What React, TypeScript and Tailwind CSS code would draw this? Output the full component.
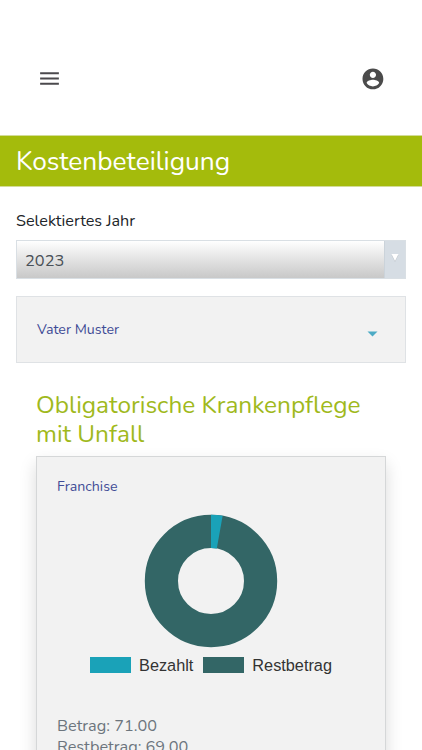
import React from "react";

const data = [
  { label: "Bezahlt", value: 2, color: "#1aa2b8" },
  { label: "Restbetrag", value: 69, color: "#336666" },
];

function Donut() {
  const total = data.reduce((sum, d) => sum + d.value, 0);
  const radius = 49.6;
  const circumference = 2 * Math.PI * radius;
  const paid = (data[0].value / total) * circumference;
  return (
    <svg className="mx-auto block" width="134" height="134" viewBox="-67 -67 134 134">
      <circle r={radius} fill="none" stroke={data[1].color} strokeWidth="33.2" />
      <circle
        r={radius}
        fill="none"
        stroke={data[0].color}
        strokeWidth="33.2"
        strokeDasharray={`${paid} ${circumference - paid}`}
        transform="rotate(-90)"
      />
    </svg>
  );
}

export default function App() {
  return (
    <div className="h-[750px] w-[422px] overflow-hidden bg-white font-['Nunito','Lato',sans-serif]">
      <header className="flex h-[135px] items-start justify-between pt-[66px] pr-[37px] pl-[37px]">
        <button aria-label="Menu" className="block">
          <svg width="25" height="25" viewBox="0 0 24 24" fill="#4b494d">
            <path d="M3 18h18v-2H3v2zm0-5h18v-2H3v2zm0-7v2h18V6H3z" />
          </svg>
        </button>
        <button aria-label="Account" className="block">
          <svg width="25" height="25" viewBox="-0.400 -0.400 24 24" fill="#4b4b4b">
            <path d="M12 2C6.480 2 2 6.480 2 12s4.480 10 10 10 10-4.480 10-10S17.520 2 12 2zm0 3c1.660 0 3 1.340 3 3s-1.340 3-3 3-3-1.340-3-3 1.340-3 3-3zm0 14.200c-2.500 0-4.710-1.280-6-3.220.030-1.990 4-3.080 6-3.080 1.990 0 5.970 1.090 6 3.080-1.290 1.940-3.500 3.220-6 3.220z" />
          </svg>
        </button>
      </header>

      <h1 className="flex h-[52px] items-center border-y border-[#d3dc98] bg-[#a4bb0c] px-4 pt-0.5 text-[26.3px] text-white">
        Kostenbeteiligung
      </h1>

      <main className="px-4">
        <label className="block pt-[22px] text-[16.2px] leading-6 text-[#212529]">Selektiertes Jahr</label>
        <div className="mt-[7px] flex h-[39px] border border-[#d9dfe4] bg-linear-to-b from-white to-[#c8c8c8]">
          <span className="flex-1 pt-px pl-2 text-[16.4px] leading-[37px] text-[#495057]">2023</span>
          <span className="flex w-[21px] justify-center border-l border-[#cbd3da] bg-[#d6dde4] pt-[13px]">
            <svg width="8" height="8" viewBox="0 0 8 8">
              <path d="M0.500 1h7L4 8z" fill="#bcc2c7" />
              <path d="M0.500 0h7L4 7z" fill="#fff" />
            </svg>
          </span>
        </div>

        <div className="mt-[17px] flex h-[67px] items-center justify-between border border-[#dfe2e5] bg-[#f2f2f2] pr-[27px] pl-5">
          <span className="pt-px text-[14.2px] text-[#3f4c96]">Vater Muster</span>
          <svg className="mt-2" width="11" height="6" viewBox="0 0 11 6">
            <path d="M0.500 0.500h10L5.500 5.500z" fill="#4dabc5" />
          </svg>
        </div>

        <section className="px-5 pt-7">
          <h2 className="text-[24.4px] leading-[28.500px] text-[#a0b91c]">
            Obligatorische Krankenpflege mit Unfall
          </h2>
          <div className="mt-2 h-[360px] border border-[#d5d7d8] bg-[#f2f2f2] px-5 pt-[18px] shadow-[0_8px_16px_rgba(0,0,0,0.15)]">
            <h3 className="text-[14.2px] leading-6 text-[#3f4c96]">Franchise</h3>
            <div className="mt-[15px]">
              <Donut />
            </div>
            <div className="mt-[9px] flex h-4 items-center justify-center font-['Liberation_Sans',Arial,sans-serif] text-[16.300px] leading-4 text-[#333]">
              <span className="mr-2 h-4 w-[41px] bg-[#1aa2b8]" />
              <span className="mr-[10px]">{data[0].label}</span>
              <span className="mr-2 h-4 w-[41px] bg-[#336666]" />
              <span>{data[1].label}</span>
            </div>
            <div className="mt-[43px] text-[16.3px] leading-[21px] text-[#6c757d]">
              <p>Betrag: 71.00</p>
              <p>Restbetrag: 69.00</p>
            </div>
          </div>
        </section>
      </main>
    </div>
  );
}
